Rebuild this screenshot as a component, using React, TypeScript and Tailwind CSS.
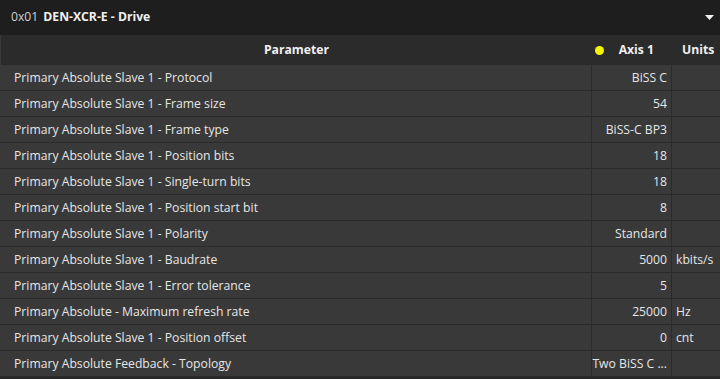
import React from "react";

const rows: [string, string, string][] = [
  ["Primary Absolute Slave 1 - Protocol", "BiSS C", ""],
  ["Primary Absolute Slave 1 - Frame size", "54", ""],
  ["Primary Absolute Slave 1 - Frame type", "BiSS-C BP3", ""],
  ["Primary Absolute Slave 1 - Position bits", "18", ""],
  ["Primary Absolute Slave 1 - Single-turn bits", "18", ""],
  ["Primary Absolute Slave 1 - Position start bit", "8", ""],
  ["Primary Absolute Slave 1 - Polarity", "Standard", ""],
  ["Primary Absolute Slave 1 - Baudrate", "5000", "kbits/s"],
  ["Primary Absolute Slave 1 - Error tolerance", "5", ""],
  ["Primary Absolute - Maximum refresh rate", "25000", "Hz"],
  ["Primary Absolute Slave 1 - Position offset", "0", "cnt"],
  ["Primary Absolute Feedback - Topology", "Two BiSS C ...", ""],
];

export default function App() {
  return (
    <div
      className="w-[720px] h-[379px] bg-[#262626] text-[12.2px] overflow-hidden"
      style={{ fontFamily: '"Open Sans", "Noto Sans", sans-serif' }}
    >
      <div className="h-[35px] bg-[#1e1e1e] flex items-center pl-[11px] pr-[6px]">
        <span className="text-[#cfcfcf]">0x01</span>
        <span className="ml-[5px] font-bold text-[#f0f0f0]">DEN-XCR-E - Drive</span>
        <div className="flex-1" />
        <svg width="9" height="6" viewBox="0 0 9 6">
          <path d="M0 0 L9 0 L4.5 5 Z" fill="#f0f0f0" />
        </svg>
      </div>
      <div className="h-[30px] bg-[#2b2b2b] flex font-bold text-[#f0f0f0] border-l border-[#3a3a3a]">
        <div className="w-[591px] flex items-center justify-center">Parameter</div>
        <div className="w-[80px] flex items-center justify-end pr-[18px] gap-[15px]">
          <span className="w-[9px] h-[9px] rounded-full bg-[#f5f500]" />
          <span>Axis 1</span>
        </div>
        <div className="flex-1 flex items-center pl-[10px]">Units</div>
      </div>
      {rows.map(([p, v, u], i) => (
        <div key={i} className="h-[26px] flex bg-[#393939] border-b border-[#2b2b2b] text-[#e6e6e6]">
          <div className="w-[592px] flex items-center pt-px pl-[14px] border-r border-[#2b2b2b]">{p}</div>
          <div className="w-[80px] flex items-center justify-end pt-px pr-[4px] border-r border-[#2b2b2b]">{v}</div>
          <div className="flex-1 flex items-center pt-px pl-[4px]">{u}</div>
        </div>
      ))}
    </div>
  );
}
